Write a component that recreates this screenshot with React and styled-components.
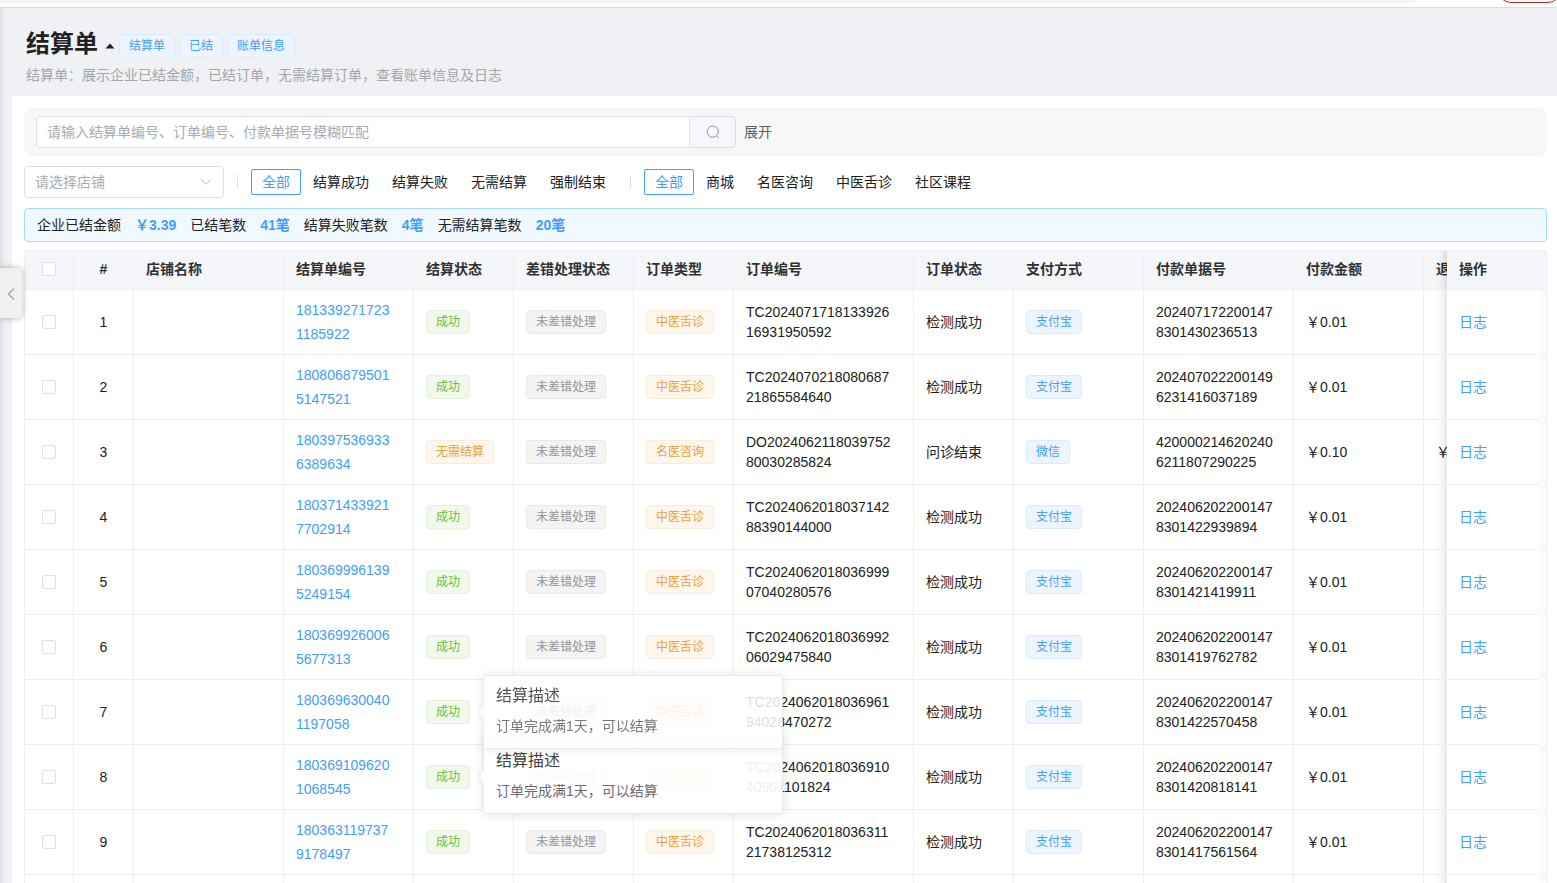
import React from "react";
import styled, { createGlobalStyle, css } from "styled-components";

const GlobalStyle = createGlobalStyle`
  *, *::before, *::after { box-sizing: border-box; }
  html, body, #root { height: 100%; }
  body {
    margin: 0;
    overflow: hidden;
    font-family: "Liberation Sans", "Noto Sans CJK SC", sans-serif;
    font-size: 14px;
    color: #212121;
    background: #f0f2f5;
  }
  button, input, select { font-family: inherit; font-size: 14px; }
`;

const Screen = styled.div`
  display: flex;
  flex-direction: column;
  height: 100vh;
`;

const BrowserEdge = styled.div`
  display: flex;
  flex: none;
  gap: 74px;
  height: 8px;
  overflow: hidden;
  background: #fff;
  border-bottom: 1px solid #dadce0;
`;

const AddressBar = styled.div`
  flex: 1;
  height: 28px;
  margin-top: -25px;
  margin-left: -14px;
  border-radius: 14px;
  background: #f1f3f4;
`;

const UpdatePill = styled.div`
  width: 65px;
  height: 28px;
  margin-top: -25px;
  margin-right: -5px;
  border: 1px solid #c5221f;
  border-radius: 14px;
`;

const Page = styled.main`
  position: relative;
  display: flex;
  flex: 1;
  flex-direction: column;
  min-height: 0;
  padding-left: 12px;
  background: linear-gradient(to right, #dcdee2, #f0f1f5 5px);
`;

const PageHeader = styled.header`
  display: flex;
  flex: none;
  flex-direction: column;
  gap: 5px;
  height: 88px;
  padding: 20px 14px 0;
`;

const TitleRow = styled.div`
  display: flex;
  align-items: center;
  height: 32px;
`;

const Title = styled.h1`
  margin: 0;
  font-size: 24px;
  line-height: 32px;
  font-weight: 700;
`;

const CaretButton = styled.button`
  display: flex;
  margin: 4px 4px 0 7px;
  padding: 0;
  border: 0;
  background: none;
  color: #212121;
`;

const TagList = styled.div`
  display: flex;
  gap: 4px;
  padding-top: 4px;
`;

const Description = styled.p`
  margin: 0;
  line-height: 20px;
  color: #a3a6ad;
`;

const tones = {
  blue: css`color: #409eff; background: #ecf5ff; border-color: #d9ecff;`,
  green: css`color: #67c23a; background: #f0f9eb; border-color: #e1f3d8;`,
  gray: css`color: #909399; background: #f4f4f5; border-color: #e9e9eb;`,
  orange: css`color: #e6a23c; background: #fdf6ec; border-color: #faecd8;`,
};

const Tag = styled.span`
  display: inline-block;
  height: 24px;
  padding: 0 9px;
  border: 1px solid;
  border-radius: 4px;
  font-size: 12px;
  line-height: 22px;
  white-space: nowrap;
  vertical-align: middle;
  ${(p) => tones[p.$tone]}
`;

const Card = styled.section`
  display: flex;
  flex: 1;
  flex-direction: column;
  min-height: 0;
  padding: 12px 10px 0 12px;
  border-top-left-radius: 4px;
  background: #fff;
`;

const SearchPanel = styled.form`
  display: flex;
  flex: none;
  align-items: center;
  gap: 8px;
  padding: 8px 12px;
  border-radius: 8px;
  background: #f7f7f7;
`;

const SearchGroup = styled.div`
  display: flex;
  width: 700px;
  height: 32px;
`;

const SearchInput = styled.input`
  flex: 1;
  min-width: 0;
  padding: 0 10px;
  border: 1px solid #dcdfe6;
  border-radius: 4px 0 0 4px;
  outline: none;
  background: #fff;
  &::placeholder { color: #a8abb2; opacity: 1; }
`;

const SearchButton = styled.button`
  display: flex;
  align-items: center;
  justify-content: center;
  width: 46px;
  padding: 0;
  border: 1px solid #dcdfe6;
  border-left: 0;
  border-radius: 0 4px 4px 0;
  background: #f5f7fa;
  color: #909399;
`;

const ExpandButton = styled.button`
  padding: 0;
  border: 0;
  background: none;
  line-height: 20px;
  color: #606266;
`;

const FilterBar = styled.div`
  display: flex;
  flex: none;
  align-items: center;
  height: 52px;
`;

const SelectBox = styled.div`
  display: grid;
  align-items: center;
  width: 200px;
  height: 32px;
  & > * { grid-area: 1 / 1; }
  & > svg { justify-self: end; margin-right: 12px; color: #b6b9c0; pointer-events: none; }
`;

const ShopSelect = styled.select`
  width: 100%;
  height: 100%;
  padding: 0 30px 0 10px;
  appearance: none;
  border: 1px solid #dcdfe6;
  border-radius: 4px;
  background: #fff;
  color: #a8abb2;
`;

const Divider = styled.span`
  width: 1px;
  height: 14px;
  margin: 0 13px;
  background: #dcdfe6;
`;

const FilterGroup = styled.div`
  display: flex;
  gap: 1px;
`;

const FilterButton = styled.button`
  height: 26px;
  padding: 0 10px;
  border: 1px solid ${(p) => (p.$active ? "#409eff" : "transparent")};
  border-radius: 2px;
  background: none;
  line-height: 22px;
  color: ${(p) => (p.$active ? "#409eff" : "#212121")};
`;

const Summary = styled.dl`
  display: flex;
  flex: none;
  align-items: center;
  gap: 14px;
  height: 34px;
  margin: 0 0 8px;
  padding: 0 12px;
  border: 1px solid #a6dcff;
  border-radius: 4px;
  background: #f0f9ff;
  line-height: 20px;
`;

const SummaryLabel = styled.dt``;

const SummaryValue = styled.dd`
  margin: 0;
  font-weight: 700;
  color: #409eff;
`;

const TableFrame = styled.div`
  position: relative;
  display: flex;
  flex: 1;
  min-height: 0;
  border-top: 1px solid #ebeef5;
  border-left: 1px solid #ebeef5;
`;

const TableScroll = styled.div`
  flex: 1;
  min-width: 0;
  overflow: auto;
  scrollbar-width: none;
`;

const ScrollTrack = styled.div`
  position: absolute;
  top: 41px;
  right: 2px;
  bottom: 0;
  z-index: 5;
  width: 6px;
  border-radius: 3px;
  background: #fafafa;
`;

const Table = styled.table`
  width: 1629px;
  min-width: 100%;
  table-layout: fixed;
  border-collapse: separate;
  border-spacing: 0;
`;

const stickyCell = css`
  position: sticky;
  right: 0;
  z-index: 3;
  &::before {
    content: "";
    position: absolute;
    top: 0;
    bottom: 0;
    left: -10px;
    width: 10px;
    background: linear-gradient(to right, rgba(0, 0, 0, 0), rgba(0, 0, 0, 0.03) 50%, rgba(0, 0, 0, 0.1));
    pointer-events: none;
  }
`;

const HeadCell = styled.th`
  height: 39px;
  padding: 0 12px 2px;
  border-right: 1px solid #ebeef5;
  border-bottom: 1px solid #ebeef5;
  background: #f4f6fa;
  text-align: ${(p) => (p.$center ? "center" : "left")};
  font-weight: 700;
  line-height: 20px;
  white-space: nowrap;
  color: #303133;
  ${(p) => p.$sticky && stickyCell}
`;

const Cell = styled.td`
  height: 65px;
  padding: 0 12px;
  border-right: 1px solid #ebeef5;
  border-bottom: 1px solid #ebeef5;
  background: #fff;
  text-align: ${(p) => (p.$center ? "center" : "left")};
  line-height: 20px;
  white-space: pre-line;
  ${(p) => p.$sticky && stickyCell}
`;

const StatusCell = styled(Cell)`
  white-space: nowrap;
`;

const Check = styled.input`
  display: block;
  width: 14px;
  height: 14px;
  margin: 0 auto;
  appearance: none;
  border: 1px solid #dcdfe6;
  border-radius: 2px;
  background: #fff;
  &:checked { border-color: #409eff; background: #409eff; }
`;

const IdLink = styled.a`
  display: block;
  line-height: 24px;
  color: #409eff;
  text-decoration: none;
`;

const TagAnchor = styled.span`
  position: relative;
  display: inline-block;
`;

const Popover = styled.div`
  position: absolute;
  top: 50%;
  left: calc(100% + 13px);
  z-index: ${(p) => (p.$front ? 3 : 2)};
  width: 300px;
  padding: 12px;
  border: 1px solid #e4e7ed;
  border-radius: 4px;
  background: #fff;
  box-shadow: 0 0 12px rgba(0, 0, 0, 0.12);
  opacity: ${(p) => (p.$front ? 0.85 : 0.93)};
  transform: translateY(-50%);
  &::before {
    content: "";
    position: absolute;
    top: 50%;
    left: -5px;
    width: 10px;
    height: 10px;
    margin-top: -5px;
    border: 1px solid #e4e7ed;
    border-top-color: transparent;
    border-right-color: transparent;
    background: #fff;
    transform: rotate(45deg);
  }
`;

const PopoverTitle = styled.div`
  margin-bottom: 12px;
  font-size: 16px;
  line-height: 16px;
  color: #303133;
`;

const PopoverText = styled.div`
  line-height: 20px;
  color: #606266;
`;

const LogLink = styled.a`
  color: #409eff;
  text-decoration: none;
`;

const CollapseHandle = styled.button`
  position: absolute;
  top: 260px;
  left: 0;
  z-index: 6;
  display: flex;
  align-items: center;
  justify-content: center;
  width: 22px;
  height: 50px;
  padding: 2px 0 0;
  border: 0;
  border-radius: 0 4px 4px 0;
  background: #f0f0f0;
  box-shadow: 0 0 6px rgba(0, 0, 0, 0.3);
  color: #a6a6a6;
`;

const columns = [
  { label: "", width: 49, center: true },
  { label: "#", width: 60, center: true },
  { label: "店铺名称", width: 150 },
  { label: "结算单编号", width: 130 },
  { label: "结算状态", width: 100 },
  { label: "差错处理状态", width: 120 },
  { label: "订单类型", width: 100 },
  { label: "订单编号", width: 180 },
  { label: "订单状态", width: 100 },
  { label: "支付方式", width: 130 },
  { label: "付款单据号", width: 150 },
  { label: "付款金额", width: 130 },
  { label: "退款金额", width: 130 },
  { label: "操作", width: 100, sticky: true },
];

const tongue = { status: "成功", type: "中医舌诊", state: "检测成功", pay: "支付宝", amount: "¥0.01", refund: "" };

const rows = [
  { ...tongue, id: "181339271723\n1185922", order: "TC2024071718133926\n16931950592", receipt: "202407172200147\n8301430236513" },
  { ...tongue, id: "180806879501\n5147521", order: "TC2024070218080687\n21865584640", receipt: "202407022200149\n6231416037189" },
  {
    id: "180397536933\n6389634", status: "无需结算", type: "名医咨询", order: "DO2024062118039752\n80030285824",
    state: "问诊结束", pay: "微信", receipt: "420000214620240\n6211807290225", amount: "¥0.10", refund: "¥0.10",
  },
  { ...tongue, id: "180371433921\n7702914", order: "TC2024062018037142\n88390144000", receipt: "202406202200147\n8301422939894" },
  { ...tongue, id: "180369996139\n5249154", order: "TC2024062018036999\n07040280576", receipt: "202406202200147\n8301421419911" },
  { ...tongue, id: "180369926006\n5677313", order: "TC2024062018036992\n06029475840", receipt: "202406202200147\n8301419762782" },
  { ...tongue, id: "180369630040\n1197058", order: "TC2024062018036961\n94028470272", receipt: "202406202200147\n8301422570458", popover: "front" },
  { ...tongue, id: "180369109620\n1068545", order: "TC2024062018036910\n40961101824", receipt: "202406202200147\n8301420818141", popover: "back" },
  { ...tongue, id: "180363119737\n9178497", order: "TC2024062018036311\n21738125312", receipt: "202406202200147\n8301417561564" },
];

const settleFilters = ["全部", "结算成功", "结算失败", "无需结算", "强制结束"];
const typeFilters = ["全部", "商城", "名医咨询", "中医舌诊", "社区课程"];

const totals = [
  ["企业已结金额", "¥3.39"],
  ["已结笔数", "41笔"],
  ["结算失败笔数", "4笔"],
  ["无需结算笔数", "20笔"],
];

function Filters({ label, items }) {
  const [active, setActive] = React.useState(0);
  return (
    <FilterGroup role="group" aria-label={label}>
      {items.map((item, i) => (
        <FilterButton key={item} type="button" $active={i === active} aria-pressed={i === active} onClick={() => setActive(i)}>
          {item}
        </FilterButton>
      ))}
    </FilterGroup>
  );
}

const yuan = (text) => text.replace("¥", "\uFFE5");

function Row({ row, index }) {
  return (
    <tr>
      <Cell $center><Check type="checkbox" aria-label={`选择第${index}行`} /></Cell>
      <Cell $center>{index}</Cell>
      <Cell />
      <Cell><IdLink href="#settlement">{row.id}</IdLink></Cell>
      <StatusCell>
        <TagAnchor>
          <Tag $tone={row.status === "成功" ? "green" : "orange"}>{row.status}</Tag>
          {row.popover && (
            <Popover role="tooltip" $front={row.popover === "front"}>
              <PopoverTitle>结算描述</PopoverTitle>
              <PopoverText>订单完成满1天，可以结算</PopoverText>
            </Popover>
          )}
        </TagAnchor>
      </StatusCell>
      <Cell><Tag $tone="gray">未差错处理</Tag></Cell>
      <Cell><Tag $tone="orange">{row.type}</Tag></Cell>
      <Cell>{row.order}</Cell>
      <Cell>{row.state}</Cell>
      <Cell><Tag $tone="blue">{row.pay}</Tag></Cell>
      <Cell>{row.receipt}</Cell>
      <Cell>{yuan(row.amount)}</Cell>
      <Cell>{yuan(row.refund)}</Cell>
      <Cell $sticky><LogLink href="#log">日志</LogLink></Cell>
    </tr>
  );
}

export default function App() {
  return (
    <>
      <GlobalStyle />
      <Screen>
        <BrowserEdge aria-hidden="true">
          <AddressBar />
          <UpdatePill />
        </BrowserEdge>
        <Page>
          <PageHeader>
            <TitleRow>
              <Title>结算单</Title>
              <CaretButton type="button" aria-label="收起说明">
                <svg width="10" height="6" viewBox="0 0 10 6"><path d="M5 0.5 9.5 5.5H0.5Z" fill="currentColor" /></svg>
              </CaretButton>
              <TagList>
                <Tag $tone="blue">结算单</Tag>
                <Tag $tone="blue">已结</Tag>
                <Tag $tone="blue">账单信息</Tag>
              </TagList>
            </TitleRow>
            <Description>结算单：展示企业已结金额，已结订单，无需结算订单，查看账单信息及日志</Description>
          </PageHeader>
          <Card>
            <SearchPanel onSubmit={(e) => e.preventDefault()}>
              <SearchGroup>
                <SearchInput type="text" aria-label="搜索结算单" placeholder="请输入结算单编号、订单编号、付款单据号模糊匹配" />
                <SearchButton type="submit" aria-label="搜索">
                  <svg width="14" height="14" viewBox="0 0 14 14" fill="none" stroke="currentColor" strokeLinecap="round">
                    <circle cx="6.8" cy="6.6" r="5.6" />
                    <path d="M10.8 10.8 12.8 12.8" />
                  </svg>
                </SearchButton>
              </SearchGroup>
              <ExpandButton type="button">展开</ExpandButton>
            </SearchPanel>
            <FilterBar>
              <SelectBox>
                <ShopSelect aria-label="店铺" defaultValue="">
                  <option value="">请选择店铺</option>
                </ShopSelect>
                <svg width="12" height="8" viewBox="0 0 12 8" fill="none" stroke="currentColor" strokeLinecap="round" strokeLinejoin="round">
                  <path d="M1.2 1.5 6 6.3 10.8 1.5" />
                </svg>
              </SelectBox>
              <Divider />
              <Filters label="结算状态" items={settleFilters} />
              <Divider />
              <Filters label="订单类型" items={typeFilters} />
            </FilterBar>
            <Summary>
              {totals.map(([label, value]) => (
                <React.Fragment key={label}>
                  <SummaryLabel>{label}</SummaryLabel>
                  <SummaryValue>{yuan(value)}</SummaryValue>
                </React.Fragment>
              ))}
            </Summary>
            <TableFrame>
              <TableScroll>
                <Table>
                  <colgroup>
                    {columns.map((c, i) => <col key={i} width={c.width} />)}
                  </colgroup>
                  <thead>
                    <tr>
                      {columns.map((c, i) => (
                        <HeadCell key={i} scope="col" $center={c.center} $sticky={c.sticky}>
                          {i === 0 ? <Check type="checkbox" aria-label="全选" /> : c.label}
                        </HeadCell>
                      ))}
                    </tr>
                  </thead>
                  <tbody>
                    {rows.map((row, i) => <Row key={row.order} row={row} index={i + 1} />)}
                    <tr>
                      {columns.map((c, i) => <Cell key={i} $sticky={c.sticky} />)}
                    </tr>
                  </tbody>
                </Table>
              </TableScroll>
              <ScrollTrack />
            </TableFrame>
          </Card>
          <CollapseHandle type="button" aria-label="收起侧栏">
            <svg width="8" height="12" viewBox="0 0 8 12" fill="none" stroke="currentColor" strokeWidth="1.4">
              <path d="M7 0.5 1.5 6 7 11.5" />
            </svg>
          </CollapseHandle>
        </Page>
      </Screen>
    </>
  );
}
